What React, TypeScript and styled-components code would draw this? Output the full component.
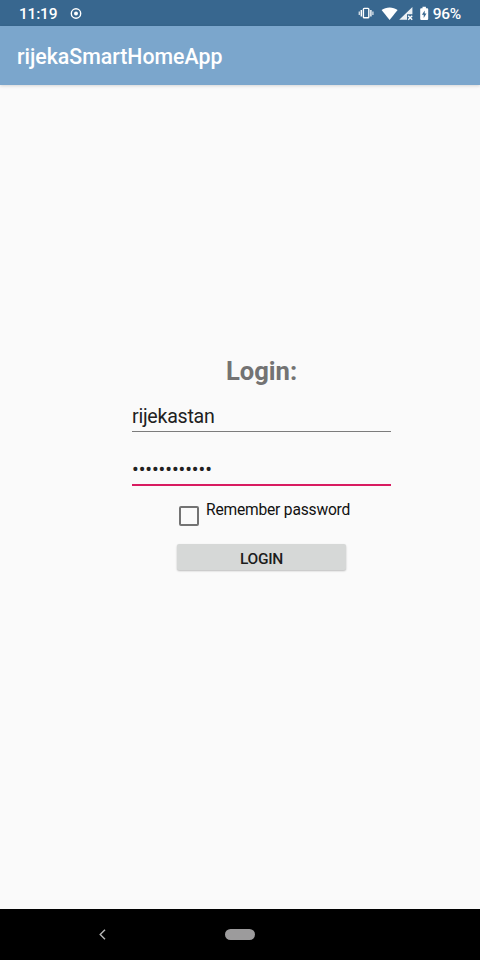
import React from "react";
import styled, { createGlobalStyle } from "styled-components";

const GlobalStyle = createGlobalStyle`
  *, *::before, *::after { box-sizing: border-box; }
  body { margin: 0; background: #fafafa; font-family: Roboto, "Liberation Sans", sans-serif; }
`;

const Screen = styled.div`
  width: 480px;
  height: 960px;
  display: flex;
  flex-direction: column;
  background: #fafafa;
  overflow: hidden;
`;

const StatusBar = styled.header`
  height: 26px;
  flex: none;
  display: flex;
  align-items: center;
  justify-content: space-between;
  padding: 1px 19px 0 19px;
  background: #38678f;
  color: #fff;
`;

const StatusGroup = styled.div<{ $gap: number }>`
  display: flex;
  align-items: center;
  gap: ${(p) => p.$gap}px;
`;

const StatusText = styled.span<{ $spacing: number }>`
  font-size: 15.5px;
  line-height: 20px;
  font-weight: 500;
  letter-spacing: ${(p) => p.$spacing}px;
  white-space: nowrap;
`;

const StatusIcons = styled.svg`
  display: block;
  width: 72px;
  height: 16px;
`;

const AppBar = styled.div`
  height: 59px;
  flex: none;
  display: flex;
  align-items: center;
  padding: 2px 17px 0;
  background: #7ba6cc;
  box-shadow: 0 1px 3px rgba(0, 0, 0, 0.15);
`;

const Title = styled.h1`
  margin: 0;
  color: #fff;
  font-size: 21.3px;
  line-height: 28px;
  font-weight: 500;
`;

const Content = styled.main`
  flex: 1;
  padding: 270px 89px 0 132px;
`;

const Form = styled.form`
  display: flex;
  flex-direction: column;
  width: 259px;
`;

const Heading = styled.h2`
  margin: 0;
  color: #737373;
  font-size: 25.6px;
  line-height: 32px;
  font-weight: 700;
  text-align: center;
`;

const Field = styled.div<{ $active?: boolean }>`
  height: ${(p) => (p.$active ? 54 : 45)}px;
  padding-top: ${(p) => (p.$active ? 23 : 16)}px;
  border-bottom: ${(p) => (p.$active ? "2px solid #d81b60" : "1px solid #7c7c7c")};
  color: #212121;
  font-size: ${(p) => (p.$active ? 20 : 19.6)}px;
  line-height: 28px;
  letter-spacing: ${(p) => (p.$active ? "-0.1px" : "-0.25px")};
`;

const RememberRow = styled.label`
  display: flex;
  align-items: flex-start;
  gap: 7px;
  height: 58px;
  padding: 14px 0 0 47px;
  color: #111;
  font-size: 15.6px;
  line-height: 20px;
  letter-spacing: -0.2px;
  white-space: nowrap;
`;

const CheckBox = styled.span`
  width: 20px;
  height: 20px;
  margin-top: 6px;
  border: 2px solid #737373;
  border-radius: 2px;
`;

const LoginButton = styled.button`
  width: 169px;
  height: 26px;
  margin: 0 0 0 45px;
  padding: 4px 0 0;
  border: 0;
  border-radius: 2px;
  background: #d6d8d7;
  box-shadow: 0 1px 2px rgba(0, 0, 0, 0.25);
  color: #1c1c1c;
  font-family: inherit;
  font-size: 15.5px;
  line-height: 22px;
  font-weight: 500;
  letter-spacing: -0.3px;
`;

const NavBar = styled.nav`
  height: 51px;
  flex: none;
  display: flex;
  align-items: center;
  padding-left: 98px;
  gap: 119px;
  background: #000;
`;

const HomePill = styled.span`
  width: 30px;
  height: 11px;
  border-radius: 6px;
  background: #9c9b9c;
`;

export default function App() {
  return (
    <>
      <GlobalStyle />
      <Screen>
        <StatusBar>
          <StatusGroup $gap={13}>
            <StatusText $spacing={-0.2}>11:19</StatusText>
            <svg width="12" height="12" viewBox="0 0 12 12">
              <circle cx="6" cy="5.5" r="4.7" fill="none" stroke="#fff" strokeWidth="1.4" />
              <circle cx="6" cy="5.5" r="2" fill="#fff" />
            </svg>
          </StatusGroup>
          <StatusGroup $gap={3}>
            <StatusIcons viewBox="0 0 72 16">
              {/* vibrate */}
              <g fill="none" stroke="#fff" strokeWidth="1.4">
                <rect x="5.4" y="2.4" width="5.4" height="9.4" rx="0.8" />
                <path d="M3.3 4v6.4M12.9 4v6.4" />
                <path d="M1.3 5.4v3.6M14.9 5.4v3.6" opacity="0.75" />
              </g>
              {/* wifi */}
              <path d="M23.6 4.1C28 0.6 35.2 0.6 39.6 4.1L31.6 14Z" fill="#fff" />
              {/* mobile signal without data */}
              <path d="M41.2 13.8 54.4 1V8.3H49V13.8Z" fill="#fff" opacity="0.9" />
              <path d="M50.2 9.8 54.2 13.8M54.2 9.8 50.2 13.8" stroke="#fff" strokeWidth="1.4" />
              {/* charging battery */}
              <path
                fill="#fff"
                fillRule="evenodd"
                d="M64.5 0.8h3.4v1.4h1.2q1.1 0 1.1 1.1v9.6q0 1.1-1.1 1.1h-5.8q-1.1 0-1.1-1.1v-9.6q0-1.1 1.1-1.1h1.2ZM66.7 4.4 63.9 8.8H65.7v3.1L68.5 7.5H66.7Z"
              />
            </StatusIcons>
            <StatusText $spacing={-0.25}>96%</StatusText>
          </StatusGroup>
        </StatusBar>
        <AppBar>
          <Title>rijekaSmartHomeApp</Title>
        </AppBar>
        <Content>
          <Form>
            <Heading>Login:</Heading>
            <Field>rijekastan</Field>
            <Field $active>••••••••••••</Field>
            <RememberRow>
              <CheckBox />
              <span>Remember password</span>
            </RememberRow>
            <LoginButton type="button">LOGIN</LoginButton>
          </Form>
        </Content>
        <NavBar>
          <svg width="8" height="12" viewBox="0 0 8 12">
            <path d="M7 0.7 2.2 5.5 7 10.3" fill="none" stroke="#b8b8b8" strokeWidth="1.4" />
          </svg>
          <HomePill />
        </NavBar>
      </Screen>
    </>
  );
}
